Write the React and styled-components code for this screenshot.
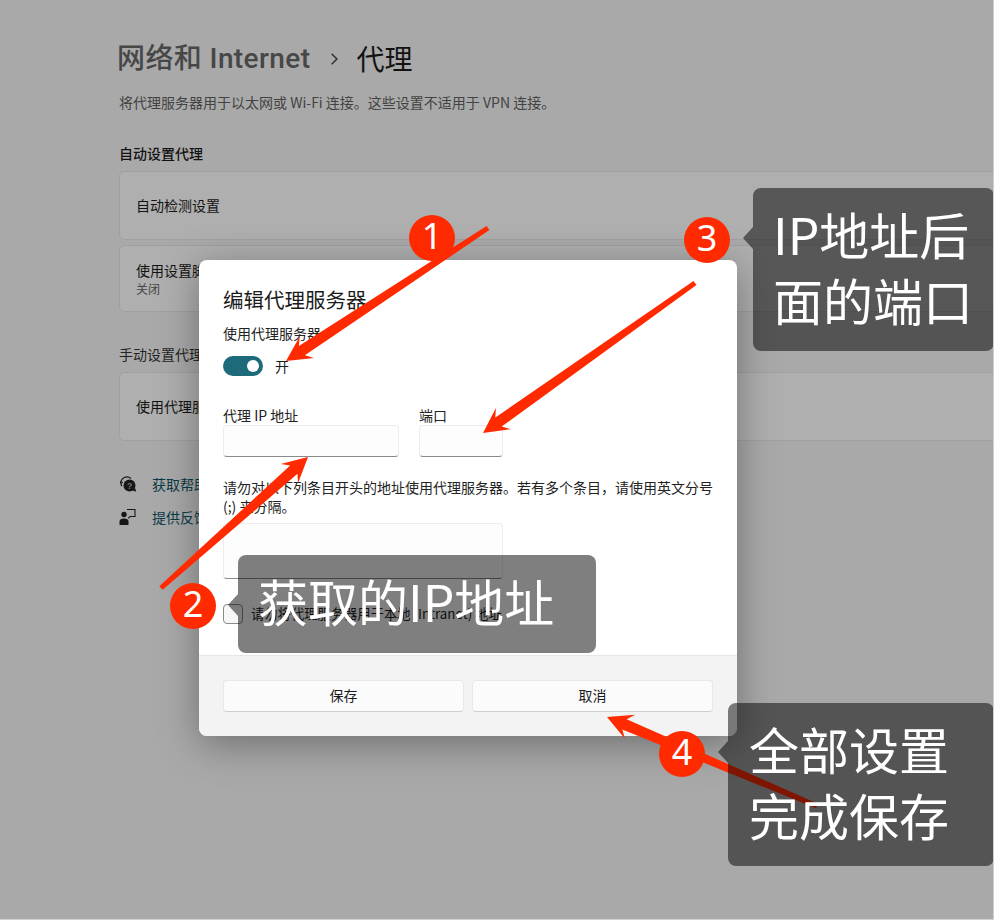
import React from "react"
import styled, { createGlobalStyle } from "styled-components"

const GlobalStyle = createGlobalStyle`
  html, body {
    margin: 0;
    padding: 0;
    background: #acacac;
  }
  * {
    box-sizing: border-box;
  }
`

const font = `"Noto Sans", "Noto Sans CJK SC", sans-serif`
const cjk = `"Noto Sans CJK SC", "Noto Sans", sans-serif`

const arrows = [
  { from: [488, 228], to: [286, 361] },
  { from: [161, 588], to: [308, 457] },
  { from: [695, 283], to: [483, 433] },
  { from: [817, 806], to: [607, 717] },
]

const badges = [
  { n: 1, x: 432, y: 238 },
  { n: 2, x: 193, y: 606 },
  { n: 3, x: 707, y: 240 },
  { n: 4, x: 682, y: 754 },
]

// tapered arrow outline, thin at the tail and flared at the head
function arrowPoints({ from, to }) {
  const dx = to[0] - from[0]
  const dy = to[1] - from[1]
  const len = Math.hypot(dx, dy)
  const ux = dx / len
  const uy = dy / len
  const at = (along, side) =>
    `${to[0] - ux * along - uy * side},${to[1] - uy * along + ux * side}`
  return [
    at(0, 0),
    at(25, 13),
    at(19, 5.5),
    at(len, 2.5),
    at(len, -2.5),
    at(19, -5.5),
    at(25, -13),
  ].join(" ")
}

function HelpIcon() {
  return (
    <svg width="18" height="18" viewBox="0 0 18 18">
      <path d="M2 8.500a6 6 0 0 1 10-5" fill="none" stroke="#222" strokeWidth="1.200" />
      <path d="M2 8.500c0 1 .3 2 .8 2.800" fill="none" stroke="#222" strokeWidth="1.200" />
      <path d="M1.500 6l.6 2.800L4 7" fill="none" stroke="#222" strokeWidth="1" />
      <circle cx="10.500" cy="10.500" r="6" fill="#222" />
      <path d="M13.500 15.500l3.800 1.300-1.300-3.800z" fill="#222" />
      <text x="10.500" y="13.500" fontSize="8.500" fontWeight="700" textAnchor="middle" fill="#acacac" fontFamily="Liberation Sans, sans-serif">?</text>
    </svg>
  )
}

function FeedbackIcon() {
  return (
    <svg width="18" height="18" viewBox="0 0 18 18">
      <circle cx="5" cy="6.500" r="2.700" fill="#222" />
      <path d="M0.500 17v-3.500c0-2 1.500-3 4.500-3s4.500 1 4.500 3V17z" fill="#222" />
      <path d="M8 1.500h8v7h-5l-1.800 1.800" fill="none" stroke="#222" strokeWidth="1.100" />
    </svg>
  )
}

export default function App() {
  return (
    <Page>
      <GlobalStyle />
      <Settings>
        <Heading>
          <Crumb>网络和 Internet</Crumb>
          <Chevron viewBox="0 0 10 12">
            <path d="M3 1.500L7.500 6 3 10.500" fill="none" stroke="#444" strokeWidth="1.300" />
          </Chevron>
          <Current>代理</Current>
        </Heading>
        <Lead>将代理服务器用于以太网或 Wi-Fi 连接。这些设置不适用于 VPN 连接。</Lead>
        <SectionTitle>自动设置代理</SectionTitle>
        <Card>
          <CardLabel>自动检测设置</CardLabel>
        </Card>
        <ScriptCard>
          <div>
            <CardLabel>使用设置脚本</CardLabel>
            <CardHint>关闭</CardHint>
          </div>
          <CardButton />
        </ScriptCard>
        <SectionTitleManual>手动设置代理</SectionTitleManual>
        <Card>
          <CardLabel>使用代理服务器</CardLabel>
          <SmallButton />
        </Card>
        <Links>
          <LinkRow>
            <HelpIcon />
            <LinkText>获取帮助</LinkText>
          </LinkRow>
          <LinkRow>
            <FeedbackIcon />
            <LinkText>提供反馈</LinkText>
          </LinkRow>
        </Links>
      </Settings>

      <Scrim />

      <Dialog>
        <DialogBody>
          <DialogTitle>编辑代理服务器</DialogTitle>
          <FieldLabel>使用代理服务器</FieldLabel>
          <ToggleRow>
            <Toggle />
            <ToggleText>开</ToggleText>
          </ToggleRow>
          <Fields>
            <Field>
              <InputLabel>代理 IP 地址</InputLabel>
              <Input $width={176} />
            </Field>
            <Field>
              <InputLabel>端口</InputLabel>
              <Input $width={84} />
            </Field>
          </Fields>
          <Note>
            请勿对以下列条目开头的地址使用代理服务器。若有多个条目，请使用英文分号 (;) 来分隔。
          </Note>
          <TextArea />
          <CheckRow>
            <CheckBox />
            <CheckText>请勿将代理服务器用于本地 (Intranet) 地址</CheckText>
          </CheckRow>
        </DialogBody>
        <DialogFooter>
          <FooterButton>保存</FooterButton>
          <FooterButton>取消</FooterButton>
        </DialogFooter>
      </Dialog>

      <Arrows viewBox="0 0 994 920">
        {arrows.map((a, i) => (
          <polygon key={i} points={arrowPoints(a)} fill="#ff2a00" />
        ))}
      </Arrows>

      <Bubble $left={753} $top={188} $width={241} $height={163} $tail={50} $pad={20}>
        IP地址后
        <br />
        面的端口
      </Bubble>
      <Bubble $left={238} $top={555} $width={358} $height={98} $tail={50} $pad={20}>
        获取的IP地址
      </Bubble>
      <Bubble $left={728} $top={703} $width={266} $height={163} $tail={49} $pad={21}>
        全部设置
        <br />
        完成保存
      </Bubble>

      {badges.map(b => (
        <Badge key={b.n} $x={b.x} $y={b.y}>
          {b.n}
        </Badge>
      ))}
    </Page>
  )
}

const Page = styled.div`
  position: relative;
  width: 994px;
  height: 920px;
  overflow: hidden;
  background: #f3f3f3;
  font-family: ${font};
  color: #1b1b1b;
  &::after {
    content: "";
    position: absolute;
    inset: 0;
    border-right: 1px solid #cfcfcf;
    border-bottom: 1px solid #cfcfcf;
    pointer-events: none;
  }
`
const Settings = styled.div`
  padding: 39px 0 0 119px;
  margin-right: -30px;
`
const Heading = styled.div`
  display: flex;
  align-items: center;
  height: 40px;
  margin-left: -2px;
`
const Crumb = styled.span`
  font-size: 28px;
  line-height: 40px;
  font-weight: 500;
  letter-spacing: 0.4px;
  color: #666;
  font-family: Roboto, "Noto Sans CJK SC", sans-serif;
`
const Chevron = styled.svg`
  width: 12px;
  height: 14px;
  margin: 0 16px 0 18px;
`
const Current = styled.span`
  font-size: 28px;
  line-height: 40px;
  color: #1b1b1b;
`
const Lead = styled.div`
  margin-top: 13px;
  font-size: 14px;
  line-height: 20px;
  color: #5f5f5f;
  font-family: ${cjk};
`
const SectionTitle = styled.div`
  margin-top: 31px;
  font-size: 14px;
  line-height: 20px;
  font-weight: 500;
  font-family: ${cjk};
`
const SectionTitleManual = styled(SectionTitle)`
  margin-top: 32px;
  font-weight: 400;
  color: #333;
`
const Card = styled.div`
  display: flex;
  align-items: center;
  justify-content: space-between;
  height: 69px;
  margin-top: 8px;
  padding: 0 0 0 16px;
  background: #fbfbfb;
  border: 1px solid #e5e5e5;
  border-radius: 5px;
`
const ScriptCard = styled(Card)`
  height: 67px;
  margin-top: 5px;
`
const CardLabel = styled.div`
  font-size: 14px;
  line-height: 19px;
  font-family: ${cjk};
`
const CardHint = styled.div`
  font-size: 12px;
  line-height: 17px;
  color: #666;
  font-family: ${cjk};
`
const CardButton = styled.div`
  width: 60px;
  height: 33px;
  margin-right: -38px;
  background: #fdfdfd;
  border: 1px solid #e0e0e0;
  border-radius: 4px;
`
const SmallButton = styled.div`
  width: 60px;
  height: 14px;
  margin-right: -38px;
  background: #fdfdfd;
  border: 1px solid #d5d5d5;
  border-radius: 4px;
`
const Links = styled.div`
  display: flex;
  flex-direction: column;
  gap: 13px;
  margin-top: 33px;
`
const LinkRow = styled.div`
  display: flex;
  align-items: center;
  gap: 15px;
  height: 20px;
`
const LinkText = styled.span`
  font-size: 14px;
  line-height: 20px;
  color: #0f5566;
  font-family: ${cjk};
`
const Scrim = styled.div`
  position: absolute;
  inset: 0;
  background: rgba(0, 0, 0, 0.3);
`
const Dialog = styled.div`
  position: absolute;
  left: 199px;
  top: 260px;
  width: 538px;
  height: 476px;
  display: flex;
  flex-direction: column;
  background: #fff;
  border-radius: 8px;
  overflow: hidden;
  box-shadow: 0 8px 40px rgba(0, 0, 0, 0.35);
  font-family: ${cjk};
`
const DialogBody = styled.div`
  flex: 1;
  padding: 25px 24px 0;
`
const DialogTitle = styled.div`
  font-size: 20.5px;
  line-height: 28px;
  color: #1b1b1b;
`
const FieldLabel = styled.div`
  margin-top: 10px;
  font-size: 14px;
  line-height: 20px;
  color: #222;
`
const ToggleRow = styled.div`
  display: flex;
  align-items: center;
  gap: 12px;
  margin-top: 13px;
  height: 20px;
`
const Toggle = styled.div`
  position: relative;
  width: 40px;
  height: 20px;
  border-radius: 10px;
  background: #1d6b7a;
  &::after {
    content: "";
    position: absolute;
    right: 4px;
    top: 4px;
    width: 12px;
    height: 12px;
    border-radius: 50%;
    background: #fff;
  }
`
const ToggleText = styled.span`
  font-size: 14px;
  line-height: 20px;
`
const Fields = styled.div`
  display: flex;
  gap: 20px;
  margin-top: 30px;
`
const Field = styled.div`
  display: flex;
  flex-direction: column;
`
const InputLabel = styled.div`
  font-size: 14px;
  line-height: 19px;
  color: #222;
`
const Input = styled.div`
  width: ${p => p.$width}px;
  height: 32px;
  background: #fdfdfd;
  border: 1px solid #ececec;
  border-bottom-color: #8a8a8a;
  border-radius: 4px;
`
const Note = styled.div`
  margin-top: 21px;
  font-size: 14px;
  line-height: 19px;
  color: #222;
`
const TextArea = styled.div`
  width: 280px;
  height: 56px;
  margin-top: 7px;
  background: #fdfdfd;
  border: 1px solid #ececec;
  border-bottom-color: #8a8a8a;
  border-radius: 4px;
`
const CheckRow = styled.div`
  display: flex;
  align-items: center;
  gap: 8px;
  margin-top: 25px;
`
const CheckBox = styled.div`
  width: 20px;
  height: 20px;
  background: #f7f7f7;
  border: 1px solid #8a8a8a;
  border-radius: 4px;
`
const CheckText = styled.span`
  font-size: 13.3px;
  line-height: 20px;
  white-space: nowrap;
  color: #222;
`
const DialogFooter = styled.div`
  display: flex;
  gap: 8px;
  height: 81px;
  padding: 24px 24px 0;
  background: #f3f3f3;
  border-top: 1px solid #e6e6e6;
`
const FooterButton = styled.div`
  flex: 1;
  height: 32px;
  display: flex;
  align-items: center;
  justify-content: center;
  padding-bottom: 2px;
  font-size: 14px;
  color: #1b1b1b;
  background: #fbfbfb;
  border: 1px solid #e8e8e8;
  border-bottom-color: #cfcfcf;
  border-radius: 4px;
`
const Arrows = styled.svg`
  position: absolute;
  left: 0;
  top: 0;
  width: 994px;
  height: 920px;
  pointer-events: none;
`
const Bubble = styled.div`
  position: absolute;
  left: ${p => p.$left}px;
  top: ${p => p.$top}px;
  width: ${p => p.$width}px;
  height: ${p => p.$height}px;
  display: flex;
  flex-direction: column;
  justify-content: center;
  padding: 0 0 8px ${p => p.$pad}px;
  white-space: nowrap;
  font-family: ${cjk};
  font-size: 50px;
  line-height: 66px;
  color: #fff;
  background: rgba(0, 0, 0, 0.5);
  border-radius: 8px;
  &::before {
    content: "";
    position: absolute;
    left: -10px;
    top: ${p => p.$tail - 11}px;
    border-style: solid;
    border-width: 11px 10px 11px 0;
    border-color: transparent rgba(0, 0, 0, 0.5) transparent transparent;
  }
`
const Badge = styled.div`
  position: absolute;
  left: ${p => p.$x - 23}px;
  top: ${p => p.$y - 23}px;
  width: 46px;
  height: 46px;
  display: flex;
  align-items: center;
  justify-content: center;
  padding-bottom: 4px;
  border-radius: 50%;
  background: #ff2a00;
  color: #fff;
  font-family: ${font};
  font-size: 36px;
  line-height: 46px;
`
